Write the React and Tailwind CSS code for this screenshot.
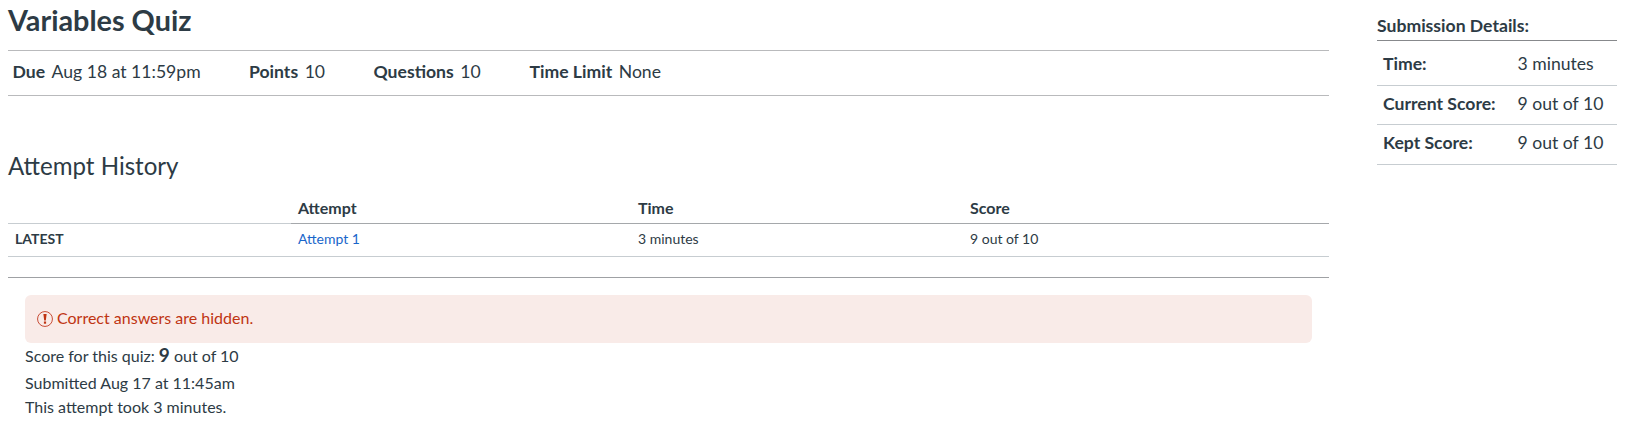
const details = [
  { label: "Time:", value: "3 minutes", row: "h-[45px] pt-[2px]" },
  { label: "Current Score:", value: "9 out of 10", row: "h-[39px] pb-[2px]" },
  { label: "Kept Score:", value: "9 out of 10", row: "h-10 pb-[2px]" },
];

function Fact({ label, value, className }) {
  return (
    <li className={`flex gap-[6.5px] ${className}`}>
      <span className="font-bold">{label}</span>
      <span>{value}</span>
    </li>
  );
}

function WarningIcon() {
  return (
    <svg className="h-4 w-4 shrink-0" viewBox="0 0 16 16" fill="none" aria-hidden="true">
      <circle cx="8" cy="8" r="7.45" stroke="#c23b22" strokeWidth="0.9" />
      <path d="M6.4 3h3.2l-.8 6.4H7.2z" fill="#bf3412" />
      <rect x="6.9" y="10.5" width="2.2" height="2.2" fill="#bf3412" />
    </svg>
  );
}

export default function App() {
  return (
    <div className="flex h-[426px] w-[1631px] overflow-hidden bg-white pl-2 font-['Lato',sans-serif] text-[#2d3b45]">
      <main className="w-[1321px] shrink-0">
        <h1 className="h-[50px] whitespace-nowrap pt-[2px] text-[28.8px] leading-[36px] font-bold">Variables Quiz</h1>
        <ul className="flex h-[46px] items-start border-y border-[#b9babc] pl-[4.5px] text-[17.6px] leading-[42px] whitespace-nowrap">
          <Fact label="Due" value="Aug 18 at 11:59pm" className="w-[236.5px]" />
          <Fact label="Points" value="10" className="w-[124.5px]" />
          <Fact label="Questions" value="10" className="w-[156px]" />
          <Fact label="Time Limit" value="None" className="" />
        </ul>
        <h2 className="mt-[52px] h-[46px] text-[24.1px] leading-[36px]">Attempt History</h2>
        <table className="w-full table-fixed border-separate border-spacing-0 text-left text-[14px]">
          <colgroup>
            <col className="w-[283px]" />
            <col className="w-[340px]" />
            <col className="w-[332px]" />
            <col />
          </colgroup>
          <thead>
            <tr className="h-[30px] text-[16px] leading-[24px]">
              <th className="border-b border-[#c7cdd1] p-0" />
              <th className="border-b border-[#a5a8ab] p-0 pb-[2px] pl-[7px] font-bold">Attempt</th>
              <th className="border-b border-[#a5a8ab] p-0 pb-[2px] pl-[7px] font-bold">Time</th>
              <th className="border-b border-[#a5a8ab] p-0 pb-[2px] pl-[7px] font-bold">Score</th>
            </tr>
          </thead>
          <tbody>
            <tr className="h-[33px] leading-[20px]">
              <th className="border-b border-[#c7cdd1] p-0 pb-[2px] pl-[7px] font-bold">LATEST</th>
              <td className="border-b border-[#c7cdd1] p-0 pb-[2px] pl-[7px] text-[#1a66ca]">Attempt 1</td>
              <td className="border-b border-[#c7cdd1] p-0 pb-[2px] pl-[7px]">3 minutes</td>
              <td className="border-b border-[#c7cdd1] p-0 pb-[2px] pl-[7px]">9 out of 10</td>
            </tr>
          </tbody>
        </table>
        <section className="mt-5 border-t border-[#9fa1a4] px-[17px] pt-[17px] text-[16px]">
          <div className="flex h-12 items-center gap-1 rounded-md bg-[#f9ebe8] pl-3 text-[#bf3412]">
            <WarningIcon />
            <span className="pb-[2px]">Correct answers are hidden.</span>
          </div>
          <p className="h-7 leading-[26px]">
            Score for this quiz: <span className="text-[19px] leading-none font-bold">9</span> out of 10
          </p>
          <p className="h-6 leading-[24px]">Submitted Aug 17 at 11:45am</p>
          <p className="h-6 leading-[24px]">This attempt took 3 minutes.</p>
        </section>
      </main>
      <aside className="ml-12 w-[240px] text-[17.6px] whitespace-nowrap">
        <h2 className="h-[41px] border-b border-[#87898c] pt-[13px] leading-[26px] font-bold">Submission Details:</h2>
        <dl>
          {details.map((item) => (
            <div key={item.label} className={`flex items-center border-b border-[#c7cdd1] pl-[6px] ${item.row}`}>
              <dt className="w-[134.5px] font-bold">{item.label}</dt>
              <dd>{item.value}</dd>
            </div>
          ))}
        </dl>
      </aside>
    </div>
  );
}
